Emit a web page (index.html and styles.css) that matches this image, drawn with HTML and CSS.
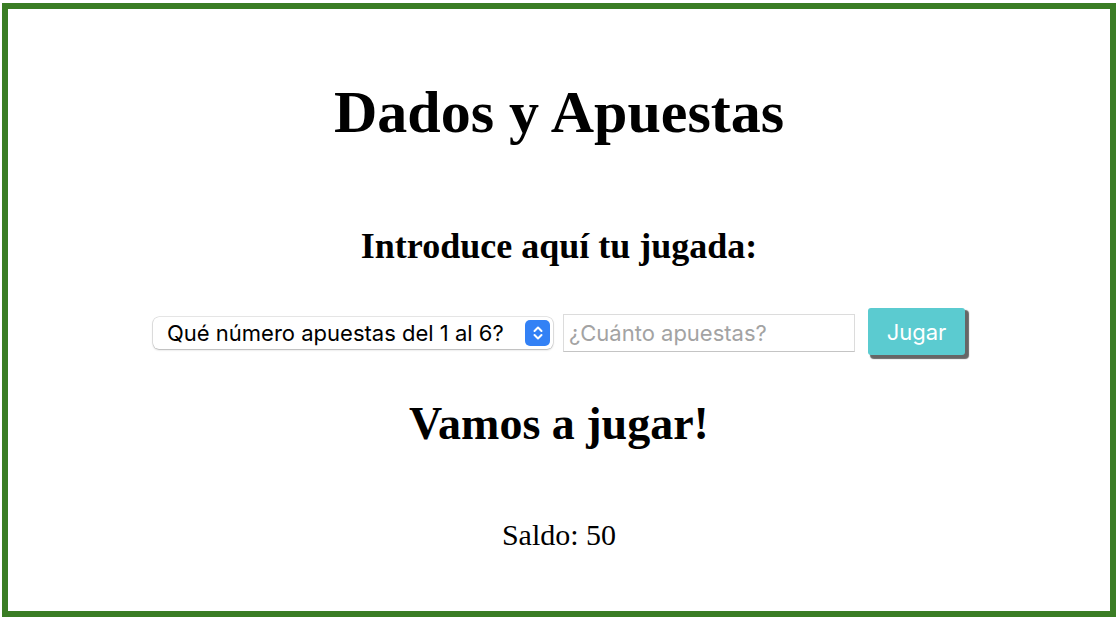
FILE: index.html
```html
<!DOCTYPE html>
<html lang="es">
<head>
<meta charset="utf-8">
<title>Dados y Apuestas</title>
<link rel="stylesheet" href="styles.css">
</head>
<body>
<main class="frame">
  <h1 class="title">Dados y Apuestas</h1>
  <h3 class="subtitle">Introduce aquí tu jugada:</h3>
  <form class="play-row" onsubmit="return false">
    <span class="select-wrap">
      <select class="bet-select">
        <option>Qué número apuestas del 1 al 6?</option>
        <option>1</option><option>2</option><option>3</option>
        <option>4</option><option>5</option><option>6</option>
      </select>
      <span class="select-arrow">
        <svg width="12" height="18" viewBox="0 0 12 18"><path d="M2.5 7 L6 3.5 L9.5 7 M2.5 11 L6 14.5 L9.5 11" fill="none" stroke="#fff" stroke-width="2" stroke-linecap="round" stroke-linejoin="round"/></svg>
      </span>
    </span>
    <input class="bet-input" type="text" placeholder="¿Cuánto apuestas?">
    <button class="play-btn" type="button">Jugar</button>
  </form>
  <h2 class="message">Vamos a jugar!</h2>
  <p class="balance">Saldo: 50</p>
</main>
</body>
</html>
```
FILE: styles.css
```css
html, body {
  margin: 0;
  padding: 0;
  background: #fff;
}
body {
  padding: 3px 4px 1px 2px;
  font-family: "Liberation Serif", "Times New Roman", serif;
  color: #000;
}
.frame {
  box-sizing: border-box;
  height: 614px;
  border: 6px solid #3a7d24;
  display: flex;
  flex-direction: column;
  align-items: center;
}
.title {
  margin: 73px 0 0;
  font-size: 60px;
  line-height: 60px;
  font-weight: bold;
}
.subtitle {
  margin: 86px 0 0;
  font-size: 36px;
  line-height: 36px;
  font-weight: bold;
}
.play-row {
  margin: 43px 0 0;
  height: 52px;
  display: flex;
  align-items: center;
  gap: 10px;
}
.select-wrap {
  position: relative;
  display: block;
}
.bet-select {
  appearance: none;
  -webkit-appearance: none;
  width: 400px;
  height: 32px;
  border: none;
  border-radius: 6px;
  background: #fff;
  box-shadow: 0 0 0 0.5px rgba(0,0,0,0.18), 0 1px 2px rgba(0,0,0,0.22);
  padding: 0 0 0 14px;
  font-family: Inter, "Liberation Sans", sans-serif;
  font-size: 22px;
  color: #000;
  display: block;
}
.select-arrow {
  position: absolute;
  right: 3px;
  top: 3px;
  width: 25px;
  height: 26px;
  border-radius: 5px;
  background: #3381f5;
  display: flex;
  align-items: center;
  justify-content: center;
  pointer-events: none;
}
.bet-input {
  box-sizing: border-box;
  width: 292px;
  height: 38px;
  border: 1px solid #dcdcdc;
  border-bottom-color: #c4c4c4;
  border-radius: 0;
  padding: 0 5px;
  font-family: Inter, "Liberation Sans", sans-serif;
  font-size: 22px;
  color: #000;
  outline: none;
}
.bet-input::placeholder {
  color: #a3a3a3;
}
.play-btn {
  margin-left: 3px;
  width: 97px;
  height: 47px;
  margin-top: -3px;
  border: none;
  border-radius: 3px;
  background: #5bcbd0;
  color: #fff;
  font-family: Inter, "Liberation Sans", sans-serif;
  font-size: 22px;
  box-shadow: 3px 3px 1px 1px #666;
  cursor: pointer;
}
.message {
  margin: 42px 0 0;
  font-size: 46px;
  line-height: 46px;
  font-weight: bold;
}
.balance {
  margin: 73px 0 0;
  font-size: 30px;
  line-height: 30px;
}
```
